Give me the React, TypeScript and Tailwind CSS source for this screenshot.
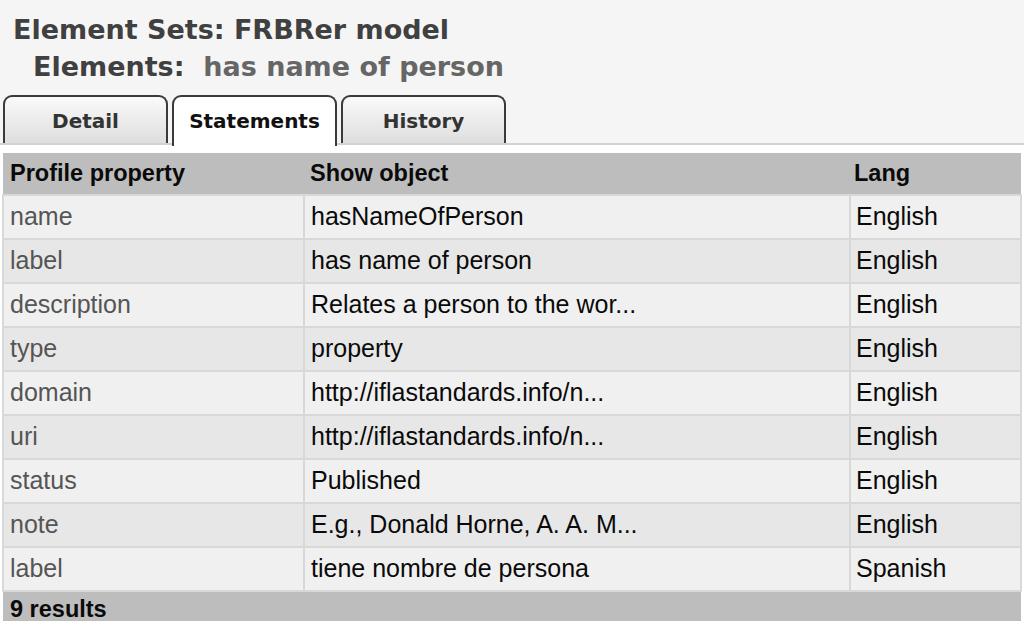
import React from "react";

const rows = [
    { prop: "name", value: "hasNameOfPerson", lang: "English" },
    { prop: "label", value: "has name of person", lang: "English" },
    { prop: "description", value: "Relates a person to the wor...", lang: "English" },
    { prop: "type", value: "property", lang: "English" },
    { prop: "domain", value: "http://iflastandards.info/n...", lang: "English" },
    { prop: "uri", value: "http://iflastandards.info/n...", lang: "English" },
    { prop: "status", value: "Published", lang: "English" },
    { prop: "note", value: "E.g., Donald Horne, A. A. M...", lang: "English" },
    { prop: "label", value: "tiene nombre de persona", lang: "Spanish" },
];

const tabs = ["Detail", "Statements", "History"];

export default function App() {
    return (
        <div className="w-[1024px] h-[621px] overflow-hidden bg-white">
            <div className="bg-[#f5f5f5] pt-[16px] font-['DejaVu_Sans',sans-serif]">
                <h1 className="pl-[13px] text-[27px] leading-[28px] font-bold text-[#404040]">
                    Element Sets: FRBRer model
                </h1>
                <h2 className="mt-[9px] pl-[33px] text-[27px] leading-[28px] font-bold text-[#404040] whitespace-pre">
                    Elements:  <span className="text-[#666]">has name of person</span>
                </h2>

                <div className="mt-[14px] flex gap-[4px] pl-[3px]">
                    {tabs.map((tab) => {
                        const active = tab === "Statements";
                        return (
                            <div
                                key={tab}
                                className={`relative w-[165px] flex items-center justify-center rounded-t-[9px] border-2 border-b-0 border-[#3a3a3a] text-[20px] font-bold ${
                                    active
                                        ? "bg-white text-[#111] -mb-[3px] h-[51px]"
                                        : "h-[48px] bg-gradient-to-b from-[#fafafa] to-[#dedede] text-[#333]"
                                }`}
                            >
                                <span className={active ? "-mt-[2px]" : "mt-[1px]"}>{tab}</span>
                            </div>
                        );
                    })}
                </div>
            </div>
            <div className="h-[2px] bg-[#d2d2d2]" />
            <div className="h-[8px] bg-white" />

            <table className="ml-[2px] w-[1020px] border-collapse font-['Liberation_Sans',Arial,sans-serif] table-fixed">
                <colgroup>
                    <col className="w-[301px]" />
                    <col className="w-[546px]" />
                    <col />
                </colgroup>
                <thead>
                    <tr className="bg-[#bdbdbd] h-[42px] text-[23.5px] text-[#0a0a0a] text-left">
                        <th className="pl-[7px] font-bold">Profile property</th>
                        <th className="pl-[6px] font-bold">Show object</th>
                        <th className="pl-[4px] font-bold">Lang</th>
                    </tr>
                </thead>
                <tbody>
                    {rows.map((row, idx) => (
                        <tr
                            key={`${row.prop}-${idx}`}
                            className={`h-[44px] text-[25px] ${idx % 2 === 0 ? "bg-[#f0f0f0]" : "bg-[#e7e7e7]"}`}
                        >
                            <td className="border-2 border-[#d8d8d8] pl-[6px] text-[#555] whitespace-nowrap">{row.prop}</td>
                            <td className="border-2 border-[#d8d8d8] pl-[6px] text-[#0a0a0a] whitespace-nowrap">{row.value}</td>
                            <td className="border-2 border-[#d8d8d8] pl-[5px] text-[#0a0a0a] whitespace-nowrap">{row.lang}</td>
                        </tr>
                    ))}
                </tbody>
                <tfoot>
                    <tr className="bg-[#bdbdbd] h-[40px]">
                        <td colSpan={3} className="pl-[7px] align-top pt-[6px] text-[23.5px] leading-[22px] font-bold text-[#0a0a0a]">
                            9 results
                        </td>
                    </tr>
                </tfoot>
            </table>
        </div>
    );
}
